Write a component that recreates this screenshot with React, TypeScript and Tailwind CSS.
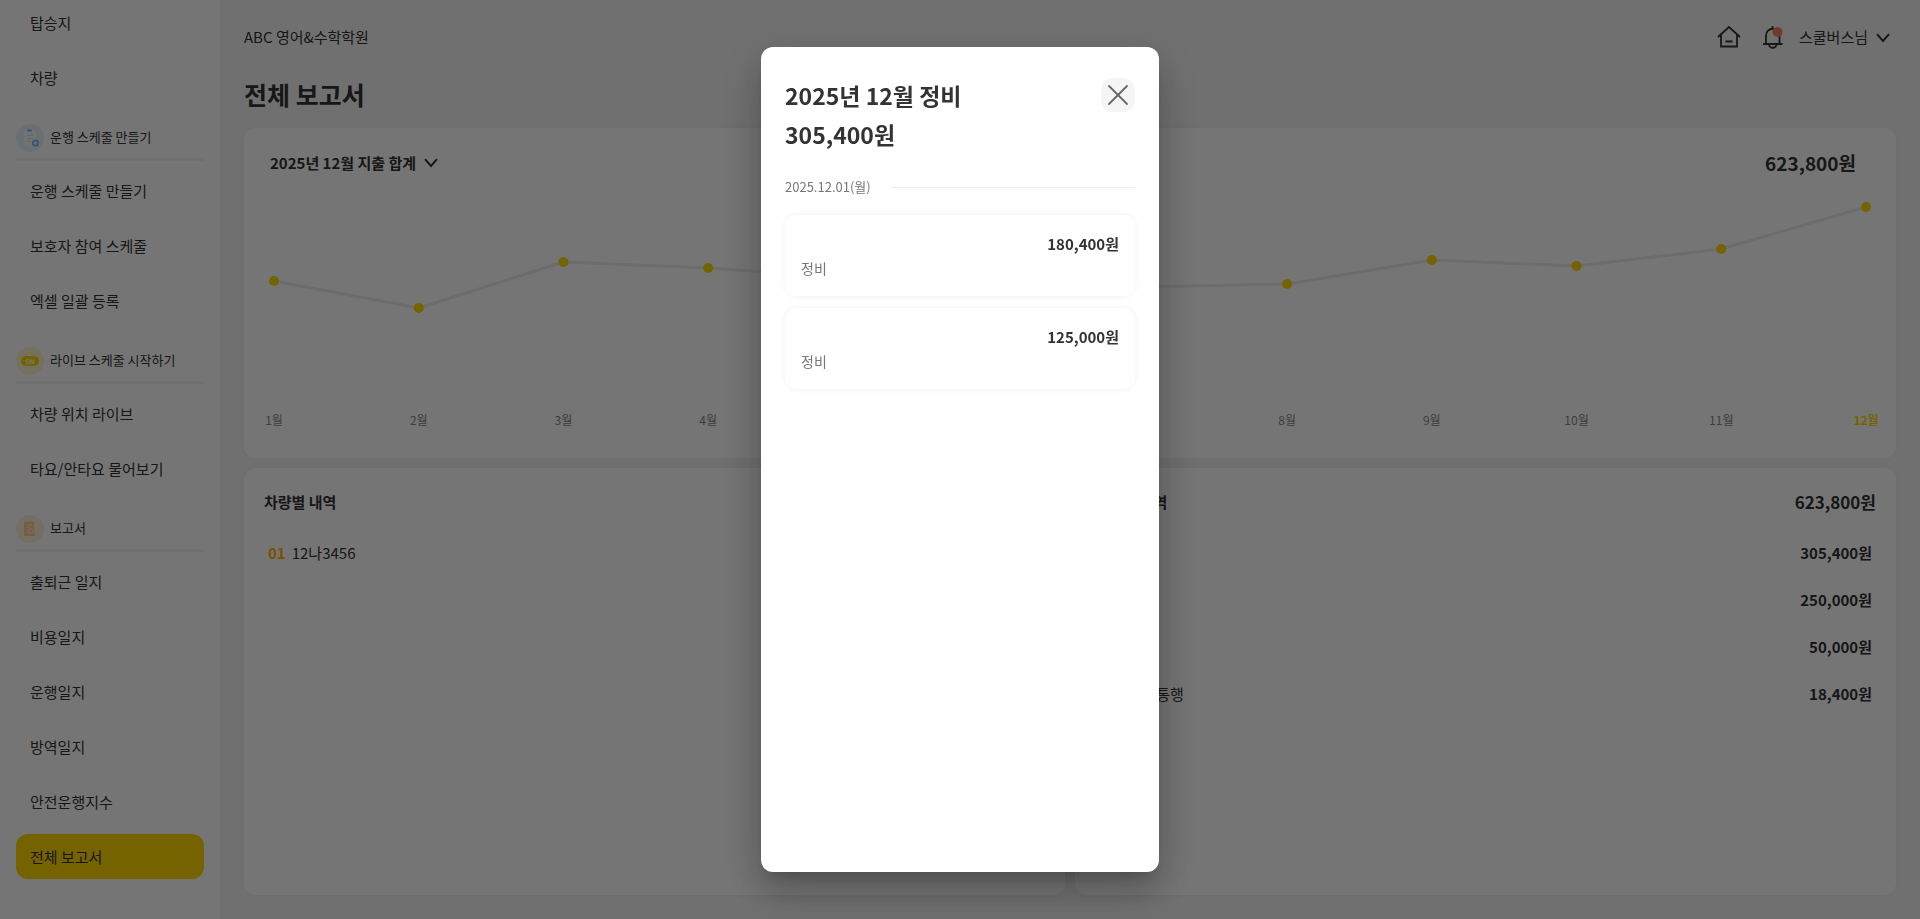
import { X } from "lucide-react";

type MenuGroup = {
  title?: string;
  icon?: "plan" | "live" | "report";
  items: string[];
};

const MENU: MenuGroup[] = [
  { items: ["탑승지", "차량"] },
  {
    title: "운행 스케줄 만들기",
    icon: "plan",
    items: ["운행 스케줄 만들기", "보호자 참여 스케줄", "엑셀 일괄 등록"],
  },
  {
    title: "라이브 스케줄 시작하기",
    icon: "live",
    items: ["차량 위치 라이브", "타요/안타요 물어보기"],
  },
  {
    title: "보고서",
    icon: "report",
    items: ["출퇴근 일지", "비용일지", "운행일지", "방역일지", "안전운행지수", "전체 보고서"],
  },
];

// y position of every month inside the chart
const MONTHS = [
  { label: "1월", y: 91 },
  { label: "2월", y: 118 },
  { label: "3월", y: 72 },
  { label: "4월", y: 78 },
  { label: "5월", y: 88 },
  { label: "6월", y: 107 },
  { label: "7월", y: 97 },
  { label: "8월", y: 94 },
  { label: "9월", y: 70 },
  { label: "10월", y: 76 },
  { label: "11월", y: 59 },
  { label: "12월", y: 17 },
];

const COSTS = [
  { name: "정비", amount: "305,400원" },
  { name: "주유", amount: "250,000원" },
  { name: "세차", amount: "50,000원" },
  { name: "주차/통행", amount: "18,400원" },
];

const REPAIRS = [
  { id: 1, name: "정비", amount: "180,400원" },
  { id: 2, name: "정비", amount: "125,000원" },
];

function Chevron() {
  return (
    <svg viewBox="0 0 14 10" className="h-[10px] w-[14px]" fill="none" aria-hidden="true">
      <path d="M1 1.200 7 8l6-6.800" stroke="#333" strokeWidth="2" />
    </svg>
  );
}

function GroupIcon({ type }: { type: MenuGroup["icon"] }) {
  if (type === "plan") {
    return (
      <svg viewBox="0 0 28 28" className="size-7" aria-hidden="true">
        <circle cx="14" cy="14" r="14" fill="#e8f1fd" />
        <rect x="8" y="6" width="12" height="16" rx="1.5" fill="#f7faff" />
        <rect x="11" y="5.5" width="5" height="2" rx="1" fill="#7fb6f5" />
        <path d="M11 11.5h6M11 14.500h6M11 17.500h4" stroke="#d5d9df" strokeWidth="1" />
        <circle cx="19.500" cy="19" r="3.500" fill="#7fb6f5" />
        <path d="M19.500 17.200v3.600M17.700 19h3.600" stroke="#fff" strokeWidth="1.200" />
      </svg>
    );
  }
  if (type === "live") {
    return (
      <span className="flex size-7 items-center justify-center rounded-full bg-[#fff6cc]">
        <span className="flex h-[10px] w-[18px] items-center justify-center rounded-full bg-[#ffd700] text-[6px] font-bold text-white">
          ON
        </span>
      </span>
    );
  }
  return (
    <svg viewBox="0 0 28 28" className="size-7" aria-hidden="true">
      <circle cx="14" cy="14" r="14" fill="#fdf0dc" />
      <path d="M9 6.500h9v10l1.500 4.500H8V7.500a1 1 0 0 1 1-1z" fill="#fccf94" />
      <path d="M11 10h5M11 12.500h3" stroke="#fdf0dc" strokeWidth="1" />
      <circle cx="14.500" cy="16" r="2.300" fill="none" stroke="#fdf0dc" />
      <path d="M16 17.500l3 3" stroke="#fdf0dc" />
    </svg>
  );
}

function Sidebar() {
  return (
    <aside className="w-[220px] shrink-0 overflow-hidden bg-white px-4">
      <div className="-mt-[5px]">
        {MENU.map((group, i) => (
          <nav key={i} aria-label={group.title ?? "관리"}>
            {group.title && (
              <div className="mb-[2px] flex h-14 items-start gap-[6px] border-b-3 border-[#f5f5f5] pt-[19px]">
                <GroupIcon type={group.icon} />
                <span className="text-[13px] leading-[26px]">{group.title}</span>
              </div>
            )}
            <ul>
              {group.items.map((item) => (
                <li key={item} className="py-[5px]">
                  <a
                    href="#"
                    className={`block rounded-xl px-[14px] text-[15px] leading-[45px] ${
                      item === "전체 보고서" ? "bg-[#ffd700]" : ""
                    }`}
                  >
                    {item}
                  </a>
                </li>
              ))}
            </ul>
          </nav>
        ))}
      </div>
    </aside>
  );
}

function Header() {
  return (
    <header className="flex h-[75px] items-center justify-between pr-[6px]">
      <span className="text-[15px]">ABC 영어&수학학원</span>
      <div className="flex items-center gap-[14px]">
        <div className="flex gap-5">
          <button aria-label="홈" className="size-6">
            <svg viewBox="0 0 24 24" fill="none" stroke="#333" strokeWidth="1.800">
              <path d="M1 11 12 1l11 10M4 9v11.500h16V9M8.500 15.500h7" />
            </svg>
          </button>
          <button aria-label="알림" className="size-6">
            <svg viewBox="0 0 24 24" fill="none" stroke="#333" strokeWidth="1.800">
              <path d="M11.500 0V3M5 18V9.500a6.700 6.700 0 0 1 13.500 0V18M2 18h19.500M8 18.500a3.700 3.200 0 0 0 7.500 0" />
              <circle cx="16.500" cy="6" r="5" fill="#f77f5e" stroke="none" />
            </svg>
          </button>
        </div>
        <button className="flex items-center gap-2 text-[15px]">
          스쿨버스님
          <Chevron />
        </button>
      </div>
    </header>
  );
}

function CostChart() {
  const x = (i: number) => `${((i * 100) / (MONTHS.length - 1)).toFixed(3)}%`;
  return (
    <svg className="mt-3 h-[250px] w-full overflow-visible" role="img" aria-label="월별 지출">
      {MONTHS.slice(1).map((m, i) => (
        <line
          key={m.label}
          x1={x(i)}
          y1={MONTHS[i].y}
          x2={x(i + 1)}
          y2={m.y}
          stroke="#ebebeb"
          strokeWidth="3"
        />
      ))}
      {MONTHS.map((m, i) => (
        <g key={m.label}>
          <circle cx={x(i)} cy={m.y} r="5" fill="#ffd700" />
          <text
            x={x(i)}
            y="235"
            textAnchor="middle"
            className={m.label === "12월" ? "fill-[#ffd700] text-xs font-bold" : "fill-[#888] text-xs"}
          >
            {m.label}
          </text>
        </g>
      ))}
    </svg>
  );
}

function RepairDialog() {
  return (
    <div className="fixed inset-0 flex justify-center bg-black/54 py-[47px]">
      <div
        role="dialog"
        aria-modal="true"
        aria-labelledby="repair-title"
        className="w-[398px] rounded-xl bg-white px-6 pt-[29px] shadow-[0_11px_15px_-7px_rgba(0,0,0,0.2),0_24px_38px_3px_rgba(0,0,0,0.14),0_9px_46px_8px_rgba(0,0,0,0.12)]"
      >
        <div className="flex items-start justify-between">
          <h2 id="repair-title" className="text-[23px] leading-[39px] font-bold">
            2025년 12월 정비
            <br />
            305,400원
          </h2>
          <button
            aria-label="닫기"
            className="mt-[2px] flex size-[34px] items-center justify-center rounded-xl bg-[#f5f5f5]"
          >
            <X size={36} strokeWidth={1.2} color="#666" className="shrink-0" />
          </button>
        </div>
        <div className="mt-[23px] flex items-center gap-5 text-[13px] leading-5 text-[#777]">
          2025.12.01(월)
          <hr className="flex-1 border-[#ededed]" />
        </div>
        <ul className="mt-[18px] flex flex-col gap-3">
          {REPAIRS.map((r) => (
            <li key={r.id} className="h-[81px] rounded-xl px-4 pt-4 shadow-[0_0_6px_rgba(0,0,0,0.07)]">
              <p className="text-right text-[15px] leading-[25px] font-bold">{r.amount}</p>
              <p className="text-[14px] leading-[25px] text-[#777]">{r.name}</p>
            </li>
          ))}
        </ul>
      </div>
    </div>
  );
}

export default function App() {
  const card = "rounded-xl bg-white shadow-[0_0_12px_rgba(0,0,0,0.05)]";
  return (
    <div className="flex h-screen overflow-hidden bg-[#f5f5f5] font-['Noto_Sans_CJK_KR',sans-serif] text-[#333]">
      <Sidebar />
      <main className="flex min-w-0 flex-1 flex-col px-6 pb-6">
        <Header />
        <h1 className="pb-[15px] text-[25px] leading-[38px] font-bold">전체 보고서</h1>
        <section className={`h-[330px] shrink-0 px-[30px] pt-5 ${card}`}>
          <div className="-ml-1 flex items-center justify-between pr-[10px]">
            <button className="flex items-center gap-2 text-[15px] leading-[30px] font-bold">
              2025년 12월 지출 합계
              <Chevron />
            </button>
            <strong className="text-[19px] leading-[30px]">623,800원</strong>
          </div>
          <CostChart />
        </section>
        <div className="mt-[10px] grid flex-1 grid-cols-2 gap-[10px]">
          <section className={`px-5 pt-[19px] ${card}`}>
            <h2 className="text-[15px] leading-[30px] font-bold">차량별 내역</h2>
            <ul className="mt-3 px-1">
              <li className="flex gap-[6px] text-[15px] leading-[47px]">
                <span className="font-bold text-[#ffb400]">01</span>
                12나3456
              </li>
            </ul>
          </section>
          <section className={`px-5 pt-[19px] ${card}`}>
            <div className="flex justify-between leading-[30px]">
              <h2 className="text-[15px] font-bold">항목별 내역</h2>
              <strong className="text-[17px]">623,800원</strong>
            </div>
            <ul className="mt-3 px-1">
              {COSTS.map((c, i) => (
                <li key={c.name} className="flex gap-[6px] text-[15px] leading-[47px]">
                  <span className="font-bold text-[#ffb400]">0{i + 1}</span>
                  <span className="flex-1">{c.name}</span>
                  <strong>{c.amount}</strong>
                </li>
              ))}
            </ul>
          </section>
        </div>
      </main>
      <RepairDialog />
    </div>
  );
}
